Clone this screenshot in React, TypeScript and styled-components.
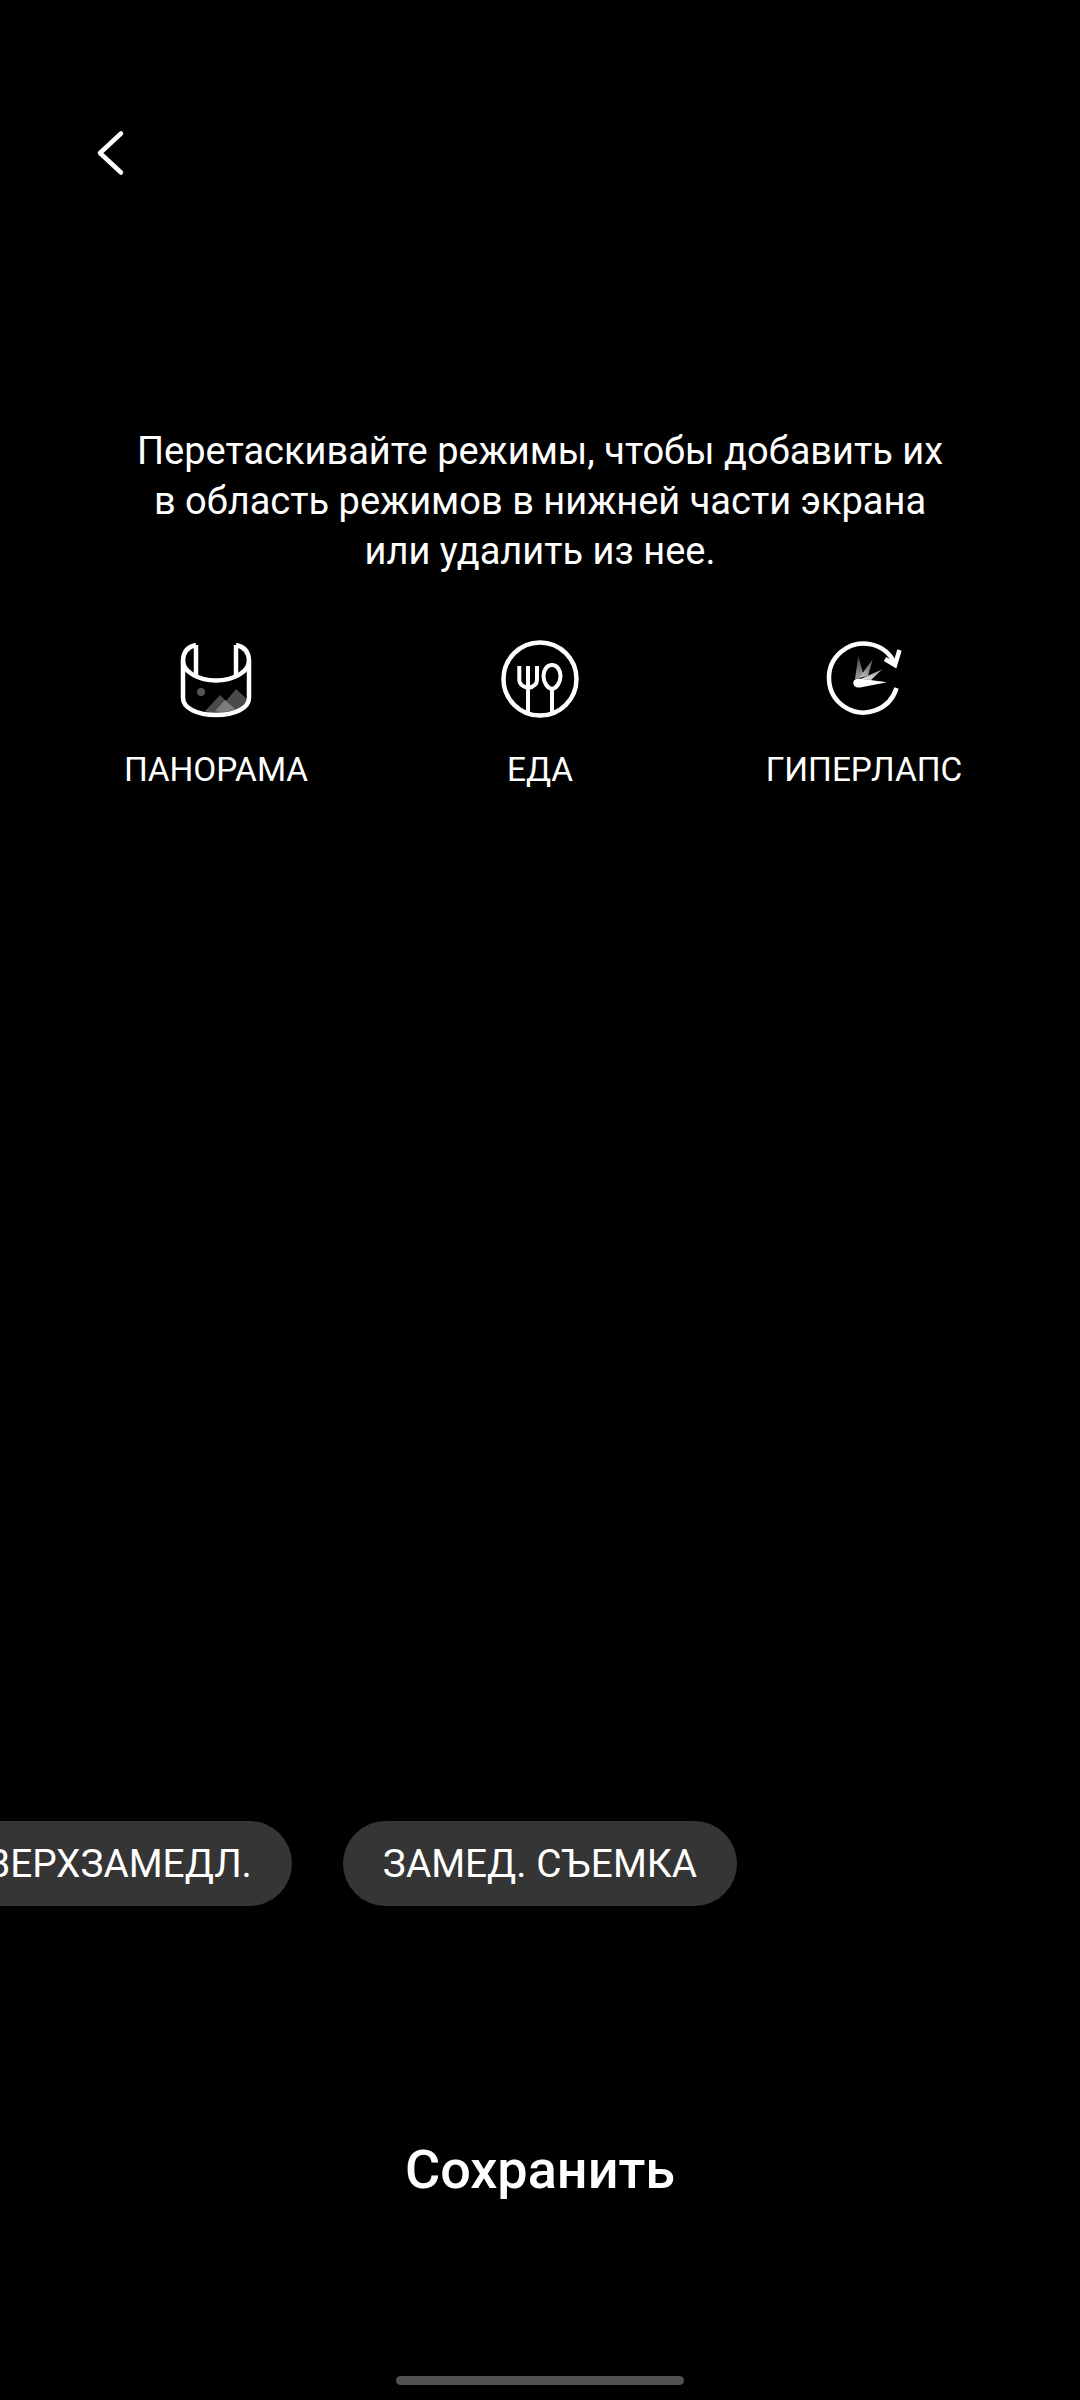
import styled, { createGlobalStyle } from "styled-components";

/***** Styled ******/
const GlobalStyle = createGlobalStyle`
  html, body {
    margin: 0;
    padding: 0;
    background: #000;
  }
`;
const Screen = styled.div`
  width: 1080px;
  height: 2400px;
  display: flex;
  flex-direction: column;
  overflow: hidden;
  background: #000;
  color: #fff;
  font-family: Roboto, "Liberation Sans", sans-serif;
`;
const Header = styled.header`
  height: 304px;
  padding: 128px 0 0 94px;
  box-sizing: border-box;
`;
const BackButton = styled.button`
  display: block;
  width: 36px;
  height: 48px;
  padding: 0;
  border: none;
  background: none;
`;
const Hint = styled.p`
  margin: 122px 0 0;
  font-size: 38px;
  line-height: 50px;
  text-align: center;
`;
const Modes = styled.div`
  display: grid;
  grid-template-columns: repeat(3, 324px);
  justify-content: center;
  margin-top: 58px;
`;
const Mode = styled.div`
  display: flex;
  flex-direction: column;
  align-items: center;
  gap: 26px;
`;
const ModeIcon = styled.svg`
  display: block;
  width: 90px;
  height: 90px;
`;
const ModeLabel = styled.span`
  font-size: 33.4px;
  line-height: 40px;
  white-space: nowrap;
`;
const Spacer = styled.div`
  flex: 1;
`;
const PillRow = styled.div`
  display: flex;
  justify-content: flex-end;
  gap: 51px;
  padding-right: 343px;
`;
const Pill = styled.div`
  flex-shrink: 0;
  height: 85px;
  display: flex;
  align-items: center;
  padding: 0 40px;
  border-radius: 43px;
  background: #353535;
  font-size: 38.8px;
  white-space: nowrap;
`;
const SaveButton = styled.button`
  display: block;
  margin: 229px auto 0;
  padding: 0;
  border: none;
  background: none;
  color: #fff;
  font-family: inherit;
  font-size: 54px;
  line-height: 70px;
  font-weight: 500;
`;
const HomeBar = styled.div`
  width: 288px;
  height: 9px;
  margin: 171px auto 15px;
  border-radius: 5px;
  background: #505050;
`;

function Panorama() {
  return (
    <ModeIcon viewBox="0 0 90 90" fill="none">
      <path d="M34 77 L49 61 L55 67 L65 55 L77 66 V68 C70 77 58 81 45 81 C41 81 37 79 34 77 Z" fill="#4a4a4a" />
      <path d="M44 77 L54 66 L64 75 C58 78 50 79 44 77 Z" fill="#7c7c7c" />
      <circle cx="30" cy="58" r="4" fill="#555" />
      <g stroke="#fff" strokeWidth="4.5">
        <path d="M25 11 C16 13 12 19 12 27 V64 C12 74 26 81 45 81 C64 81 78 74 78 64 V27 C78 19 74 13 65 11" />
        <path d="M12 27 C12 38 28 46.5 45 46.5 C62 46.5 78 38 78 27" />
        <path d="M25 11 V41 M65 11 V41" />
      </g>
    </ModeIcon>
  );
}

function Food() {
  return (
    <ModeIcon viewBox="0 0 90 90" fill="none" stroke="#fff" strokeWidth="4">
      <circle cx="45" cy="45" r="36.5" strokeWidth="4.5" />
      <path d="M24.3 32 V46 C24.3 51 29 53 33 54 C38 53 42 51 42 46 V32 M33 32 V78" />
      <path d="M57 31 C52 31 48.5 36 48.5 42 C48.5 48 52 54 57 55 C62 54 65.5 48 65.5 42 C65.5 36 62 31 57 31 Z" />
      <path d="M57 55 V78" />
    </ModeIcon>
  );
}

function Hyperlapse() {
  return (
    <ModeIcon viewBox="0 0 90 90" fill="none">
      <defs>
        <linearGradient id="ray1" x1="0" y1="1" x2="0" y2="0">
          <stop offset="0" stopColor="#a0a0a0" />
          <stop offset="1" stopColor="#3c3c3c" />
        </linearGradient>
        <linearGradient id="ray2" x1="0" y1="1" x2="1" y2="0">
          <stop offset="0" stopColor="#c8c8c8" />
          <stop offset="1" stopColor="#5a5a5a" />
        </linearGradient>
        <linearGradient id="ray3" x1="0" y1="1" x2="1" y2="0">
          <stop offset="0" stopColor="#f0f0f0" />
          <stop offset="1" stopColor="#909090" />
        </linearGradient>
      </defs>
      <path d="M76 30 A34.5 34.5 0 1 0 77.5 54" stroke="#fff" strokeWidth="4.5" />
      <path d="M80.5 16 L76 31 L66 25" stroke="#fff" strokeWidth="4.5" />
      <path d="M36 45 L39.3 22 L45 42 Z" fill="url(#ray1)" />
      <path d="M40 44 L53.7 25.3 L49 42 Z" fill="url(#ray2)" />
      <path d="M42 45 L63.3 35.3 L52 46 Z" fill="url(#ray3)" />
      <path d="M34.3 49 C34.3 46 37 44.3 40 44.5 L68 48.3 L41 53.5 C37 54 34.3 52 34.3 49 Z" fill="#fff" />
    </ModeIcon>
  );
}

function App() {
  return (
    <>
      <GlobalStyle />
      <Screen>
        <Header>
          <BackButton>
            <svg width="36" height="48" viewBox="0 0 36 48" fill="none">
              <path d="M27 5.5 L6 25 L27 44.5" stroke="#fff" strokeWidth="4.5" strokeLinecap="round" strokeLinejoin="round" />
            </svg>
          </BackButton>
        </Header>

        <Hint>
          Перетаскивайте режимы, чтобы добавить их
          <br />
          в область режимов в нижней части экрана
          <br />
          или удалить из нее.
        </Hint>

        <Modes>
          <Mode>
            <Panorama />
            <ModeLabel>ПАНОРАМА</ModeLabel>
          </Mode>
          <Mode>
            <Food />
            <ModeLabel>ЕДА</ModeLabel>
          </Mode>
          <Mode>
            <Hyperlapse />
            <ModeLabel>ГИПЕРЛАПС</ModeLabel>
          </Mode>
        </Modes>

        <Spacer />

        <PillRow>
          <Pill>СВЕРХЗАМЕДЛ.</Pill>
          <Pill>ЗАМЕД. СЪЕМКА</Pill>
        </PillRow>

        <SaveButton>Сохранить</SaveButton>
        <HomeBar />
      </Screen>
    </>
  );
}

export default App;
